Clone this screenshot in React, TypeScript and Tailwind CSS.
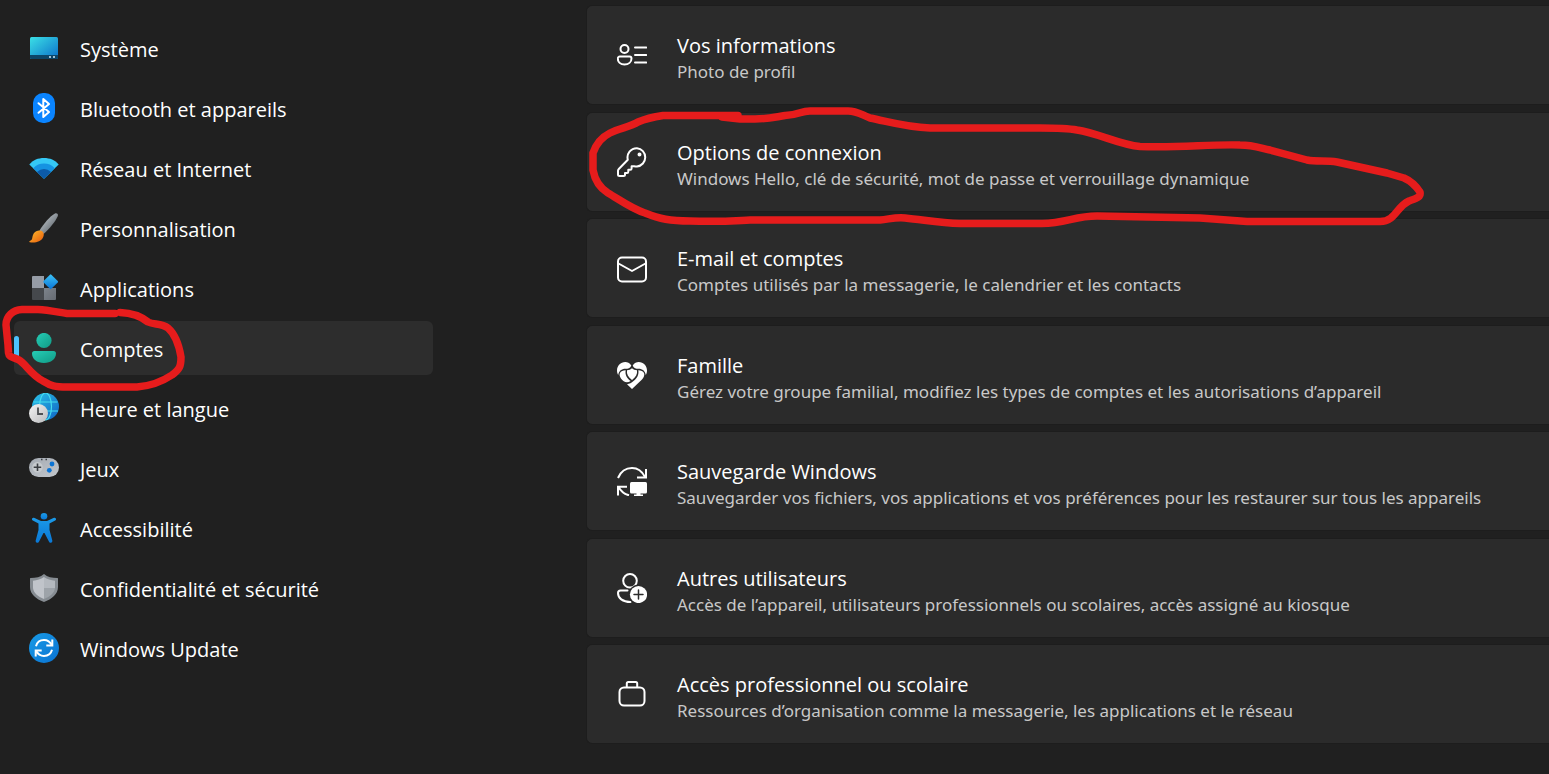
import React from "react";

type IconProps = { className?: string };

const SystemIcon = () => (
  <svg viewBox="0 0 30 30" className="size-[30px]">
    <defs>
      <linearGradient id="sys" x1="0" y1="0" x2="1" y2="1">
        <stop offset="0" stopColor="#3be0e6" />
        <stop offset="1" stopColor="#0b6fc9" />
      </linearGradient>
    </defs>
    <rect x="1" y="4" width="28" height="22" rx="1.5" fill="url(#sys)" />
    <path d="M1 22h28v2.500a1.500 1.500 0 0 1-1.500 1.500h-25a1.500 1.500 0 0 1-1.500-1.500z" fill="#0c4568" />
    <rect x="20" y="23" width="2" height="2" fill="#9fc0d4" />
    <rect x="24" y="23" width="2" height="2" fill="#9fc0d4" />
  </svg>
);

const BluetoothIcon = () => (
  <svg viewBox="0 0 30 30" className="size-[30px]">
    <rect x="4" y="0" width="22" height="30" rx="10" fill="#0a84ff" />
    <path d="M9.500 10.200 20 19l-5.700 5V6L20 11 9.500 19.800" fill="none" stroke="#fff" strokeWidth="2" strokeLinejoin="round" strokeLinecap="round" />
  </svg>
);

const NetworkIcon = () => (
  <svg viewBox="0 0 30 30" className="size-[30px]">
    <defs>
      <clipPath id="fan">
        <path d="M15 25.800.300 11.500C4 7 9 5 15 5s11 2 14.700 6.500z" />
      </clipPath>
    </defs>
    <g clipPath="url(#fan)">
      <rect width="30" height="30" fill="#35c8f5" />
      <circle cx="15" cy="25.500" r="15" fill="#1593e2" />
      <circle cx="15" cy="25.500" r="9.500" fill="#0c5aa8" />
    </g>
  </svg>
);

const BrushIcon = () => (
  <svg viewBox="0 0 30 30" className="size-[30px]">
    <defs>
      <linearGradient id="handle" x1="0" y1="0" x2="1" y2="1">
        <stop offset="0.300" stopColor="#a9b0b6" />
        <stop offset="0.800" stopColor="#636a70" />
      </linearGradient>
      <linearGradient id="tip" x1="0" y1="0" x2="1" y2="1">
        <stop offset="0" stopColor="#ffc02e" />
        <stop offset="1" stopColor="#e8590c" />
      </linearGradient>
    </defs>
    <path d="M10.500 17.500C15 10.500 21 3 26 .500c2-.800 3.500.700 2.700 2.700C26.500 8.500 20.500 15.500 14.500 21z" fill="url(#handle)" />
    <path d="M10 17.500c4-.500 6 3 4 7-2 4.300-8 5.700-13.200 4.700-.700-.200-.600-1 0-1.200 3-1 2.200-3 3-5.500.900-3 3-4.800 6.200-5z" fill="url(#tip)" />
  </svg>
);

const AppsIcon = () => (
  <svg viewBox="0 0 30 30" className="size-[30px]">
    <defs>
      <linearGradient id="diamond" x1="0" y1="0" x2="1" y2="1">
        <stop offset="0" stopColor="#3cc4f7" />
        <stop offset="1" stopColor="#0a73d6" />
      </linearGradient>
      <linearGradient id="tile" x1="0" y1="0" x2="1" y2="1">
        <stop offset="0" stopColor="#7d838b" />
        <stop offset="1" stopColor="#666b72" />
      </linearGradient>
    </defs>
    <path d="M3 4a1 1 0 0 1 1-1h11v12H3z" fill="#969ca6" />
    <path d="M3 15h12v12H4a1 1 0 0 1-1-1z" fill="#45484c" />
    <path d="M15 15h12v11a1 1 0 0 1-1 1H15z" fill="url(#tile)" />
    <rect x="16.300" y="3.300" width="11" height="11" rx="1" transform="rotate(45 21.800 8.600)" fill="url(#diamond)" />
  </svg>
);

const AccountIcon = () => (
  <svg viewBox="0 0 30 30" className="size-[30px]">
    <defs>
      <linearGradient id="acc" x1="0" y1="0" x2="1" y2="1">
        <stop offset="0" stopColor="#26cdb6" />
        <stop offset="1" stopColor="#109a85" />
      </linearGradient>
    </defs>
    <circle cx="15" cy="7.500" r="7.600" fill="url(#acc)" />
    <path d="M5.500 18h19A2.500 2.500 0 0 1 27 20.500C27 26 22 30 15 30S3 26 3 20.500A2.500 2.500 0 0 1 5.500 18z" fill="url(#acc)" />
  </svg>
);

const TimeIcon = () => (
  <svg viewBox="0 0 30 30" className="size-[30px]">
    <defs>
      <linearGradient id="globe" x1="0" y1="0" x2="1" y2="1">
        <stop offset="0" stopColor="#2cc4e8" />
        <stop offset="1" stopColor="#0f62c4" />
      </linearGradient>
      <linearGradient id="clock" x1="0" y1="0" x2="1" y2="1">
        <stop offset="0" stopColor="#f4f4f4" />
        <stop offset="1" stopColor="#b9babc" />
      </linearGradient>
    </defs>
    <circle cx="16.500" cy="13.500" r="13.500" fill="url(#globe)" />
    <g fill="none" stroke="#45dcee" strokeWidth="1.200">
      <ellipse cx="16.500" cy="13.500" rx="6" ry="13.500" />
      <path d="M4.500 9h24M4 18h25" />
    </g>
    <circle cx="9.500" cy="20.500" r="9.500" fill="url(#clock)" />
    <path d="M9 14.500v6.500h5" fill="none" stroke="#4d5053" strokeWidth="1.800" />
  </svg>
);

const GameIcon = () => (
  <svg viewBox="0 0 30 30" className="size-[30px]">
    <defs>
      <linearGradient id="pad" x1="0" y1="0" x2="1" y2="1">
        <stop offset="0" stopColor="#a4aab2" />
        <stop offset="1" stopColor="#c3c7cc" />
      </linearGradient>
    </defs>
    <rect x="0" y="5" width="30" height="19" rx="9.500" fill="url(#pad)" />
    <circle cx="8.500" cy="14.300" r="5.200" fill="#c6cace" />
    <path d="M8.500 10.500v7.500M4.700 14.300h7.500" stroke="#3b3e42" strokeWidth="1.600" />
    <path d="M12 6.500h1.500M16.500 6.500H18" stroke="#3b3e42" strokeWidth="1.300" />
    <circle cx="23" cy="11" r="2.400" fill="#0b74d4" />
    <circle cx="20.300" cy="17.300" r="2.400" fill="#0b74d4" />
  </svg>
);

const AccessIcon = () => (
  <svg viewBox="0 0 30 30" className="size-[30px]">
    <defs>
      <linearGradient id="man" x1="0" y1="0" x2="0" y2="1">
        <stop offset="0" stopColor="#1b9ae8" />
        <stop offset="1" stopColor="#0a78d6" />
      </linearGradient>
    </defs>
    <circle cx="15" cy="3.300" r="3.300" fill="url(#man)" />
    <path d="M5 4.800 12 8h6l7-3.200c2-.700 2.800 2 1.200 2.800L20.500 10.500v6.500l2.800 10.500c.500 2.300-2.600 3.200-3.400 1L15.500 20h-1l-4.400 8.500c-.800 2.200-3.900 1.300-3.400-1L9.500 17v-6.500L3.800 7.600C2.200 6.800 3 4.100 5 4.800z" fill="url(#man)" />
  </svg>
);

const ShieldIcon = () => (
  <svg viewBox="0 0 30 30" className="size-[30px]">
    <path d="M15 1c3.500 3 8 4 13.500 4q.500 0 .500.700V14c0 7-6 12-14 15C7 26 1 21 1 14V5.700Q1 5 1.500 5C7 5 11.500 4 15 1z" fill="#868c92" />
    <path d="M15 4c3 2.200 7 3.500 11 3.700V15H15z" fill="#b4b9bf" />
    <path d="M15 4C12 6.200 8 7.500 4 7.700V15c.500 5 5 8.500 11 11z" fill="#c0c4ca" />
    <path d="M15 15h11c-.500 5-5 8.500-11 11z" fill="#9da3a9" />
  </svg>
);

const UpdateIcon = () => (
  <svg viewBox="0 0 30 30" className="size-[30px]">
    <defs>
      <linearGradient id="upd" x1="0" y1="0" x2="1" y2="1">
        <stop offset="0" stopColor="#189be6" />
        <stop offset="1" stopColor="#0a72d2" />
      </linearGradient>
    </defs>
    <circle cx="15" cy="15" r="15" fill="url(#upd)" />
    <g fill="none" stroke="#fff" strokeWidth="2">
      <path d="M7 13.200C8 9.300 11 7 15 7c3.500 0 6 1.500 8 5.200" />
      <path d="M23.300 6.500v6h-6" />
      <path d="M23 16.800C22 20.700 19 23 15 23c-3.500 0-6-1.500-8-5.200" />
      <path d="M6.700 23.500v-6h6" />
    </g>
  </svg>
);

const line = {
  fill: "none",
  stroke: "#fff",
  strokeWidth: 2,
  strokeLinecap: "round",
  strokeLinejoin: "round",
} as const;

const InfoIcon = () => (
  <svg viewBox="0 0 30 30" className="size-[30px]" {...line}>
    <circle cx="7.500" cy="9" r="4" />
    <path d="M3 16.500h9.500a2 2 0 0 1 2 2c0 3.500-3 6-7 6s-6.700-2.500-6.700-6a2 2 0 0 1 2-2z" />
    <path d="M18 7.500h11.200M18 15h11.200M18 22.500h11.200" />
  </svg>
);

const KeyIcon = () => (
  <svg viewBox="0 0 30 30" className="size-[30px]" {...line}>
    <path d="M20 1.200a9.300 9.300 0 0 0-9.200 11.600L1.800 22a2.700 2.700 0 0 0-.800 2v3.500A1.500 1.500 0 0 0 2.500 29h4a1.500 1.500 0 0 0 1.500-1.500V26h2a1.300 1.300 0 0 0 1.300-1.300v-2h2a1.300 1.300 0 0 0 1.300-1.300v-2.200h2.500c.900.200 1.900.300 2.900.300a9.200 9.200 0 0 0 0-18.300z" />
    <circle cx="22.500" cy="7.500" r="1" fill="#fff" />
  </svg>
);

const MailIcon = () => (
  <svg viewBox="0 0 30 30" className="size-[30px]" {...line}>
    <rect x="1" y="4.500" width="28" height="24" rx="4" />
    <path d="M1.500 10.500 15 18 28.500 10.500" />
  </svg>
);

const FamilyIcon = () => (
  <svg viewBox="0 0 30 30" className="size-[30px]" fill="#fff">
    <path d="M14.300 5.500C12.500 2.800 10.500 2 8.300 2 3.500 2 0 6 0 10.500c0 1.700.500 3.200 1.200 4.500C2 11 4.500 8.800 8.500 8.800c2.500 0 4.800-.600 5.800-3.300z" />
    <path d="M15.700 5.500C17.500 2.800 19.500 2 21.700 2 26.500 2 30 6 30 10.500c0 1.700-.500 3.200-1.200 4.500-.800-4-3.300-6.200-7.300-6.200-2.500 0-4.800-.600-5.800-3.300z" />
    <path d="M15 8.300c1.200 1.200 3 1.900 5 2 .600 3.700-1.200 7-5 9.700-3.800-2.700-5.600-6-5-9.700 2-.100 3.800-.800 5-2z" />
    <path d="M8.700 10.200c-.800 4.500 1 7.700 5 10.800-2.500 1.700-5 1.600-7 .300C3.500 18.700 1.800 15.500 3 13c1-2 3-2.800 5.700-2.800z" />
    <path d="M21.300 10.200c2.700 0 4.700.800 5.700 2.800.900 2-.200 4.500-2 6.500L15 29l-5-4.800c2.500-.200 4.500-1.500 6.500-3.200 3.700-3 5.600-6.500 4.800-10.800z" />
  </svg>
);

const BackupIcon = () => (
  <svg viewBox="0 0 30 30" className="size-[30px]">
    <g fill="none" stroke="#fff" strokeWidth="2">
      <path d="M1 12C4 5 8.500 2 15 2c6 0 10 3 13 9" />
      <path d="M29 3v8.500h-9" />
      <path d="M1 29.500V20.800h9M1.500 21c2.500 4.500 5.500 7 10.500 8.300" />
    </g>
    <rect x="13" y="16" width="17" height="11.500" rx="1.500" fill="#fff" />
    <path d="M19.500 27h4v1.500H26V30.500h-9v-2h2.500z" fill="#fff" />
  </svg>
);

const UsersIcon = () => (
  <svg viewBox="0 0 30 30" className="size-[30px]">
    <g {...line}>
      <circle cx="13" cy="7.800" r="6.800" />
      <path d="M10.500 17.500H3.500a2.500 2.500 0 0 0-2.500 2.500c0 5 4.500 9 12.500 9" />
    </g>
    <circle cx="21.500" cy="21.500" r="10" fill="#2b2b2b" />
    <circle cx="21.500" cy="21.500" r="8.600" fill="#fff" />
    <path d="M21.500 17v9M17 21.500h9" stroke="#2b2b2b" strokeWidth="1.500" strokeLinecap="round" />
  </svg>
);

const WorkIcon = () => (
  <svg viewBox="0 0 30 30" className="size-[30px]" {...line}>
    <rect x="2.500" y="8.500" width="25" height="18" rx="4.500" />
    <path d="M9.800 8V4.500a1.500 1.500 0 0 1 1.500-1.500h7.400a1.500 1.500 0 0 1 1.500 1.500V8" />
  </svg>
);

type Entry = { label: string; Icon: React.FC<IconProps>; active?: boolean };

const nav: Entry[] = [
  { label: "Système", Icon: SystemIcon },
  { label: "Bluetooth et appareils", Icon: BluetoothIcon },
  { label: "Réseau et Internet", Icon: NetworkIcon },
  { label: "Personnalisation", Icon: BrushIcon },
  { label: "Applications", Icon: AppsIcon },
  { label: "Comptes", Icon: AccountIcon, active: true },
  { label: "Heure et langue", Icon: TimeIcon },
  { label: "Jeux", Icon: GameIcon },
  { label: "Accessibilité", Icon: AccessIcon },
  { label: "Confidentialité et sécurité", Icon: ShieldIcon },
  { label: "Windows Update", Icon: UpdateIcon },
];

const cards = [
  { title: "Vos informations", text: "Photo de profil", Icon: InfoIcon },
  { title: "Options de connexion", text: "Windows Hello, clé de sécurité, mot de passe et verrouillage dynamique", Icon: KeyIcon },
  { title: "E-mail et comptes", text: "Comptes utilisés par la messagerie, le calendrier et les contacts", Icon: MailIcon },
  { title: "Famille", text: "Gérez votre groupe familial, modifiez les types de comptes et les autorisations d’appareil", Icon: FamilyIcon },
  { title: "Sauvegarde Windows", text: "Sauvegarder vos fichiers, vos applications et vos préférences pour les restaurer sur tous les appareils", Icon: BackupIcon },
  { title: "Autres utilisateurs", text: "Accès de l’appareil, utilisateurs professionnels ou scolaires, accès assigné au kiosque", Icon: UsersIcon },
  { title: "Accès professionnel ou scolaire", text: "Ressources d’organisation comme la messagerie, les applications et le réseau", Icon: WorkIcon },
];

function Annotations() {
  return (
    <svg
      viewBox="0 0 1549 774"
      width="1549"
      height="774"
      aria-hidden="true"
      className="pointer-events-none absolute top-0 left-0 max-w-none"
      fill="none"
      stroke="#e61c1c"
      strokeWidth="7.500"
      strokeLinecap="round"
      strokeLinejoin="round"
    >
      <path d="M115 313.500H67C57 312 48 310 38 309.500H22C13 310 6 316 6 325L8 345 8.500 353C9 358 14 357 19 360C26 364 30 374 43 381C51 386 55 387 67 387H137C150 386 163 381 172 375C180 369 181 366 181 357C179 345 176 335 168 328C161 323 154 325 148 322C142 317 134 313 120 312.500" />
      <path d="M738 115.500H663C653 117 645 119 638 122C630 127 620 128 610 133C602 137 596 144 593 153V170C595 181 600 188 608 193C620 200 632 209 645 213C660 219 670 221 690 221C720 222 730 221 750 220H880C890 219 896 217 905 218C925 220 940 223 960 223.500H1042C1066 223 1075 216 1097 216L1200 218 1247 221.500H1380C1396 221 1396 207 1409 201C1417 198 1421 197 1420 192C1416 186 1411 181 1404 178L1387 173 1337 162C1326 160 1317 162 1307 160L1270 150C1257 147 1252 145 1240 145C1210 144 1180 148 1140 146.500C1120 145 1098 133 1077 130C1066 128 1053 128 1040 128H930C905 127 890 122 870 118C860 114 857 111 848 111H810C800 111 800 115 785 115.500C775 117 768 119 755 119H740L722 117" />
    </svg>
  );
}

export default function App() {
  return (
    <div className="relative flex min-h-screen overflow-hidden bg-[#202020] font-['Noto_Sans','Open_Sans',sans-serif] text-white">
      <nav aria-label="Paramètres" className="flex w-[433px] shrink-0 flex-col gap-1.5 pt-[21px] pl-3.5">
        {nav.map(({ label, Icon, active }) => (
          <a
            key={label}
            href="#"
            aria-current={active ? "page" : undefined}
            className={`relative flex h-[54px] items-center gap-[21px] rounded-md pl-[15px] font-['Open_Sans','Noto_Sans',sans-serif] text-[20px] leading-7 ${active ? "bg-[#2d2d2d]" : ""}`}
          >
            {active && <span className="absolute top-[15px] left-0 h-6 w-[5px] rounded-full bg-[#4cc2ff]" />}
            <Icon />
            <span className="pt-[3px] whitespace-nowrap">{label}</span>
          </a>
        ))}
      </nav>
      <main className="ml-[153px] min-w-0 flex-1 pt-[5px]">
        {cards.map(({ title, text, Icon }) => (
          <a
            key={title}
            href="#"
            className="flex h-[100px] items-center gap-[30px] rounded-l-md border border-r-0 border-[#1d1d1d] bg-[#2b2b2b] pl-[30px] odd:mb-[7px] even:mb-1.5"
          >
            <Icon />
            <span className="flex flex-col pt-1.5 whitespace-nowrap">
              <span className="font-['Open_Sans','Noto_Sans',sans-serif] text-[20px] leading-7">{title}</span>
              <span className="text-[17px] leading-6 text-[#c8c8c8]">{text}</span>
            </span>
          </a>
        ))}
      </main>
      <Annotations />
    </div>
  );
}
